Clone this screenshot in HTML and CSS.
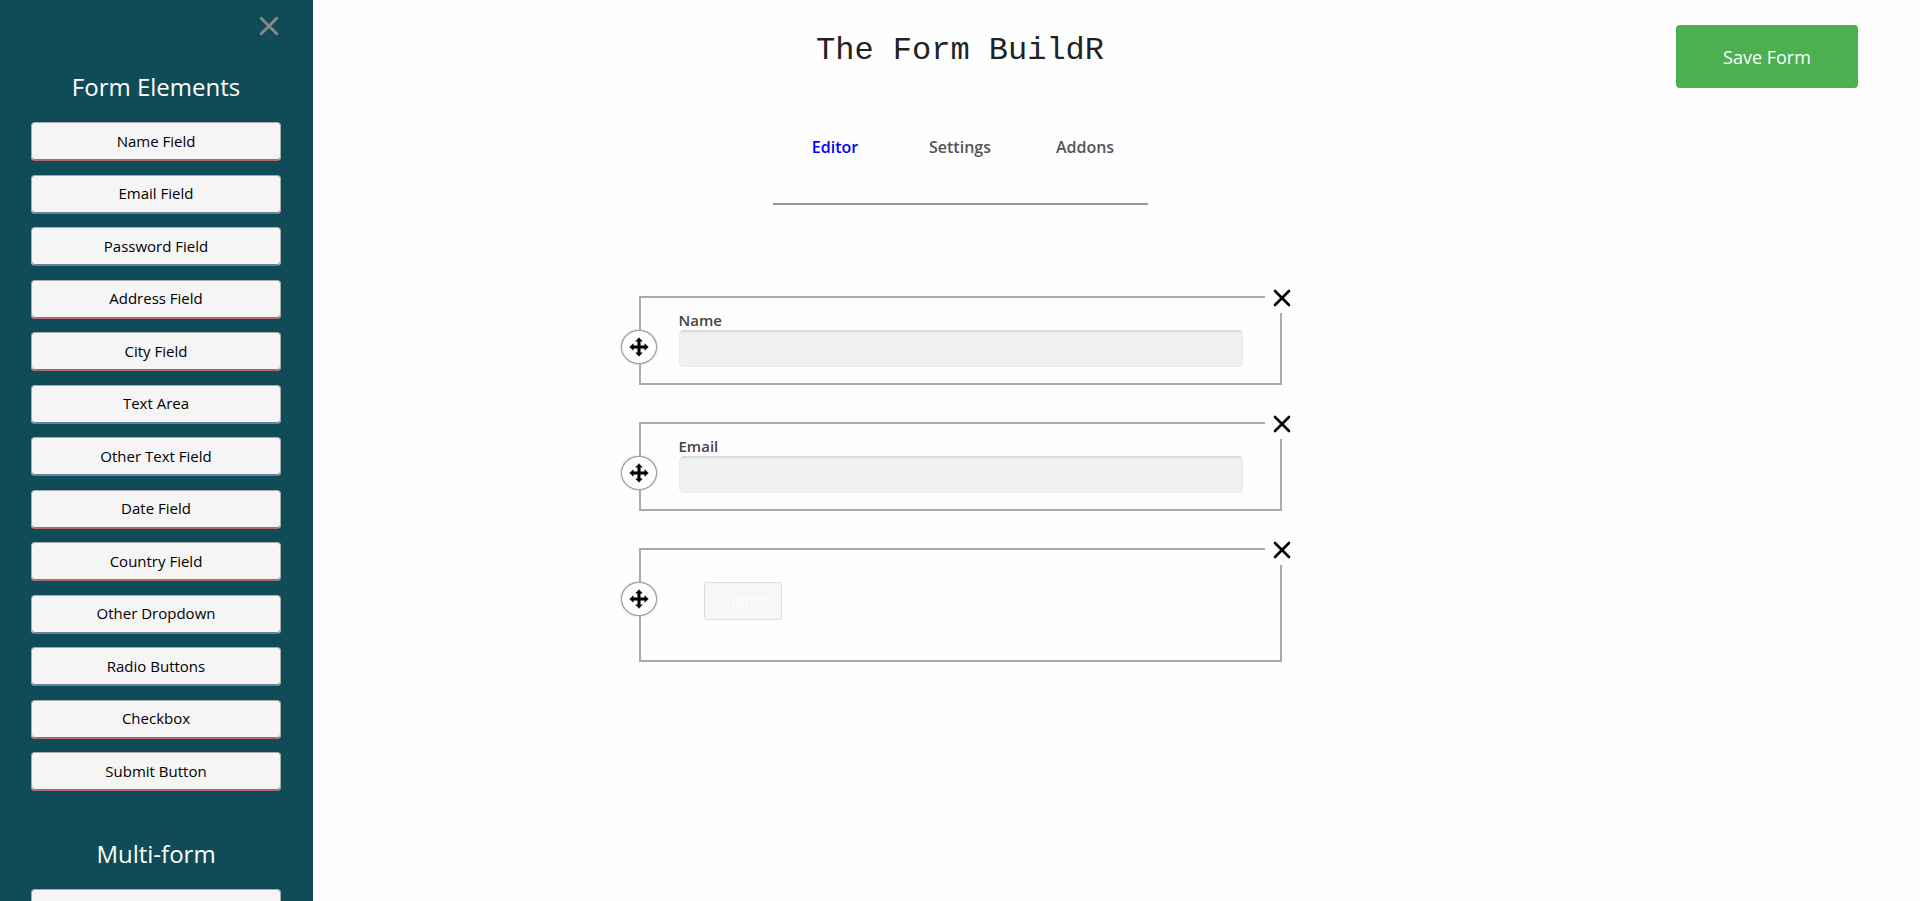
FILE: index.html
```html
<!DOCTYPE html>
<html lang="en">
<head>
<meta charset="utf-8">
<title>The Form BuildR</title>
<meta name="viewport" content="width=device-width, initial-scale=1">
<link rel="stylesheet" href="styles.css">
</head>
<body>
<svg class="sprite" aria-hidden="true">
  <symbol id="cross" viewBox="0 0 18 18"><path d="M2 2 16 16M16 2 2 16" fill="none" stroke="currentColor" stroke-width="2.6" stroke-linecap="round"/></symbol>
  <symbol id="move" viewBox="0 0 20 20"><path fill="currentColor" stroke="currentColor" stroke-width=".6" stroke-linejoin="round" d="M10 .7 13.2 4.2H11.2V8.8H15.8V6.8L19.3 10 15.8 13.2V11.2H11.2V15.8H13.2L10 19.3 6.8 15.8H8.8V11.2H4.2V13.2L.7 10 4.2 6.8V8.8H8.8V4.2H6.8Z"/></symbol>
</svg>

<aside class="sidebar">
  <button class="sidebar-close" type="button" aria-label="Close panel"><svg class="icon-cross icon-large"><use href="#cross"/></svg></button>
  <section class="group">
    <h2 class="group-title">Form Elements</h2>
    <div class="group-list elements">
      <button class="element" type="button">Name Field</button>
      <button class="element" type="button">Email Field</button>
      <button class="element" type="button">Password Field</button>
      <button class="element" type="button">Address Field</button>
      <button class="element" type="button">City Field</button>
      <button class="element" type="button">Text Area</button>
      <button class="element" type="button">Other Text Field</button>
      <button class="element" type="button">Date Field</button>
      <button class="element" type="button">Country Field</button>
      <button class="element" type="button">Other Dropdown</button>
      <button class="element" type="button">Radio Buttons</button>
      <button class="element" type="button">Checkbox</button>
      <button class="element" type="button">Submit Button</button>
    </div>
  </section>
  <section class="group">
    <h2 class="group-title">Multi-form</h2>
    <div class="group-list">
      <button class="element" type="button" aria-label="Add step"></button>
    </div>
  </section>
</aside>

<header class="header">
  <h1 class="title">The Form BuildR</h1>
  <button class="save" type="button">Save Form</button>
</header>

<nav class="tabs">
  <a class="tab active" href="#editor">Editor</a>
  <a class="tab" href="#settings">Settings</a>
  <a class="tab" href="#addons">Addons</a>
</nav>

<main class="canvas" id="editor">
  <div class="card">
    <button class="drag" type="button" aria-label="Move"><svg class="icon-move"><use href="#move"/></svg></button>
    <button class="remove" type="button" aria-label="Remove"><svg class="icon-cross"><use href="#cross"/></svg></button>
    <label class="label" for="name">Name</label>
    <input class="field" id="name" type="text">
  </div>
  <div class="card">
    <button class="drag" type="button" aria-label="Move"><svg class="icon-move"><use href="#move"/></svg></button>
    <button class="remove" type="button" aria-label="Remove"><svg class="icon-cross"><use href="#cross"/></svg></button>
    <label class="label" for="email">Email</label>
    <input class="field" id="email" type="email">
  </div>
  <div class="card card-submit">
    <button class="drag" type="button" aria-label="Move"><svg class="icon-move"><use href="#move"/></svg></button>
    <button class="remove" type="button" aria-label="Remove"><svg class="icon-cross"><use href="#cross"/></svg></button>
    <button class="submit" type="submit">Submit</button>
  </div>
</main>
</body>
</html>
```
FILE: styles.css
```css
* { box-sizing: border-box; }

body {
  margin: 0;
  background: #fefefe;
  color: #000;
  font-family: "Open Sans", "Noto Sans", sans-serif;
}

button { font-family: inherit; cursor: pointer; }

.sprite { position: absolute; width: 0; height: 0; }
.icon-cross { display: block; width: 18px; height: 18px; }
.icon-large { width: 20px; height: 20px; }
.icon-move { display: block; width: 20px; height: 20px; }

/* Sidebar, laid over the page */
.sidebar {
  position: fixed;
  top: 0;
  bottom: 0;
  left: 0;
  width: 313px;
  padding: 0 32px 0 31px;
  overflow-y: auto;
  scrollbar-width: none;
  background: #0f4c57;
}

.sidebar-close {
  display: block;
  margin: 16px 2px 0 auto;
  padding: 0;
  border: 0;
  background: none;
  color: #888;
}

.group { padding-top: 34px; }
.group + .group { padding-top: 46px; }

.group-title {
  margin: 0 0 18px;
  color: #fff;
  font-size: 24px;
  font-weight: 400;
  line-height: 34px;
  text-align: center;
}

.group-list { display: grid; align-content: space-between; }
.elements { min-height: 669px; }

.element {
  min-height: 39px;
  padding: 0 8px 2px;
  border: 1px solid #aaa;
  border-bottom: 1px solid #b06a6e;
  border-radius: 4px;
  background: #f5f5f5;
  box-shadow: inset 0 -1px 0 #6080a0;
  color: #000;
  font-size: 15px;
  line-height: 20px;
}

/* Header */
.header {
  display: grid;
  grid-template-columns: 1fr auto 1fr;
  align-items: start;
  padding: 25px 62px 0;
}

.title {
  grid-column: 2;
  margin: 8px 0 0;
  color: #222;
  font-family: "Liberation Mono", "Courier New", monospace;
  font-size: 32px;
  font-weight: 400;
  line-height: 36px;
}

.save {
  justify-self: end;
  width: 182px;
  height: 63px;
  border: 0;
  border-radius: 4px;
  background: #4caf50;
  color: #fff;
  font-size: 18px;
}

/* Tabs */
.tabs {
  display: grid;
  grid-template-columns: repeat(3, 1fr);
  width: 375px;
  margin: 47px auto 0;
  padding-bottom: 44px;
  border-bottom: 2px solid #999;
}

.tab {
  color: #555;
  font-size: 16px;
  font-weight: 600;
  line-height: 24px;
  text-align: center;
  text-decoration: none;
}

.tab.active { color: #00f; }

/* Form canvas */
.canvas {
  display: grid;
  gap: 37px;
  max-width: 643px;
  margin: 91px auto 0;
}

.card {
  position: relative;
  display: flex;
  flex-direction: column;
  padding: 12px 37px 16px 38px;
  border: 2px solid #aaa;
}

.card-submit { padding: 32px 63px 40px; align-items: flex-start; }

.label {
  align-self: flex-start;
  color: #444;
  font-size: 15px;
  font-weight: 600;
  line-height: 20px;
}

.field {
  width: 100%;
  height: 37px;
  padding: 0 12px;
  border: 1px solid #ececec;
  border-top: 2px solid #dadada;
  border-radius: 5px;
  background: #f0f0f0;
  font: inherit;
}

.drag {
  position: absolute;
  top: 32px;
  left: -20px;
  display: grid;
  place-items: center;
  width: 36px;
  height: 34px;
  padding: 0;
  border: 1px solid #999;
  border-radius: 50%;
  background: #fff;
  box-shadow: 0 0 2px #aaa;
  color: #000;
}

.remove {
  position: absolute;
  top: -15px;
  right: -19px;
  display: grid;
  place-items: center;
  width: 34px;
  height: 30px;
  padding: 0;
  border: 0;
  background: #fefefe;
  color: #000;
}

.submit {
  width: 78px;
  height: 38px;
  padding: 0 0 2px;
  border: 1px solid #ddd;
  border-radius: 3px;
  background: #f7f7f7;
  color: #fff;
  font-size: 15px;
}
```
